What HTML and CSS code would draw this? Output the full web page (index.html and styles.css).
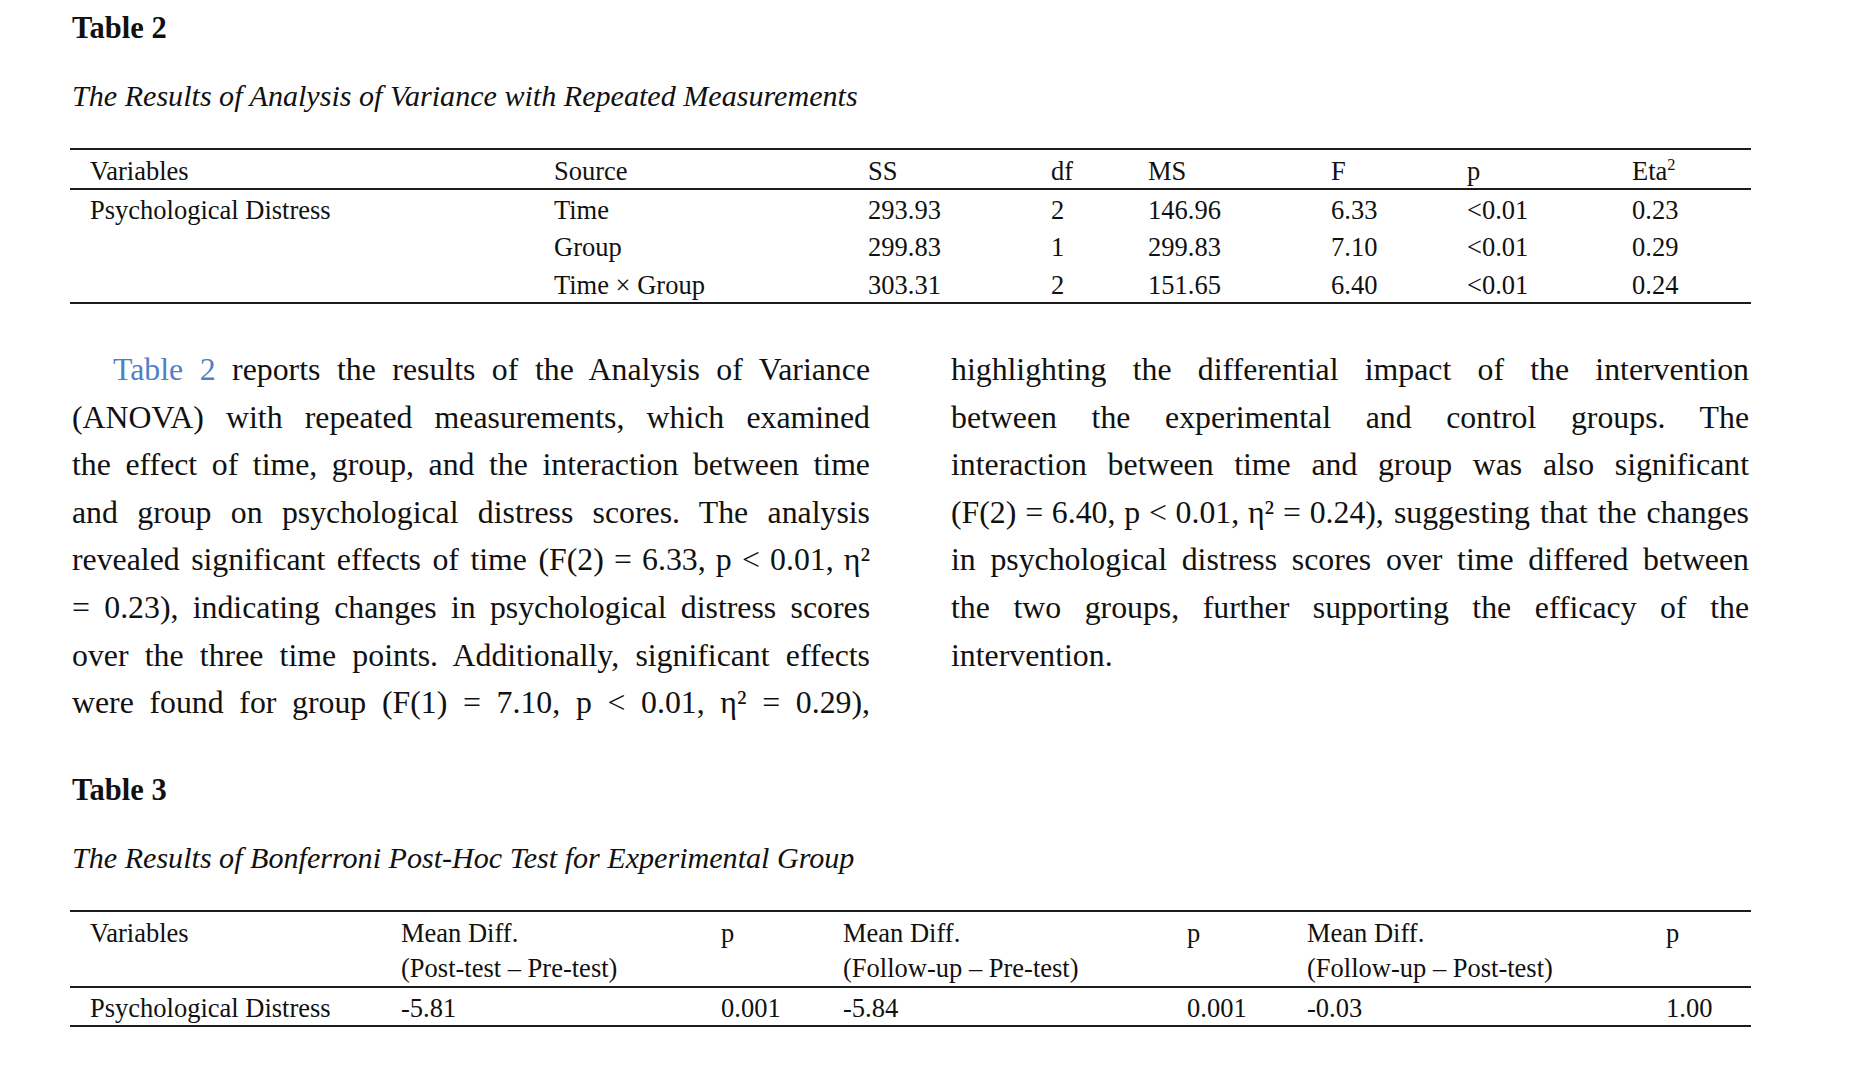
FILE: index.html
```html
<!DOCTYPE html>
<html lang="en">
<head>
<meta charset="utf-8">
<title>Results of Analysis of Variance</title>
<link rel="stylesheet" href="styles.css">
</head>
<body>
<main class="page">
  <h2 class="tbl-title">Table 2</h2>
  <p class="tbl-caption">The Results of Analysis of Variance with Repeated Measurements</p>
  <table class="data t2">
    <colgroup>
      <col class="w466"><col class="w314"><col class="w183"><col class="w97"><col class="w183"><col class="w136"><col class="w165"><col class="w137">
    </colgroup>
    <thead>
      <tr><th>Variables</th><th>Source</th><th>SS</th><th>df</th><th>MS</th><th>F</th><th>p</th><th>Eta<sup>2</sup></th></tr>
    </thead>
    <tbody>
      <tr class="first"><td>Psychological Distress</td><td>Time</td><td>293.93</td><td>2</td><td>146.96</td><td>6.33</td><td>&lt;0.01</td><td>0.23</td></tr>
      <tr><td></td><td>Group</td><td>299.83</td><td>1</td><td>299.83</td><td>7.10</td><td>&lt;0.01</td><td>0.29</td></tr>
      <tr class="last"><td></td><td>Time × Group</td><td>303.31</td><td>2</td><td>151.65</td><td>6.40</td><td>&lt;0.01</td><td>0.24</td></tr>
    </tbody>
  </table>

  <p class="body">
    <span class="ln indent"><a class="ref" href="#">Table 2</a> reports the results of the Analysis of Variance</span>
    <span class="ln">(ANOVA) with repeated measurements, which examined</span>
    <span class="ln">the effect of time, group, and the interaction between time</span>
    <span class="ln">and group on psychological distress scores. The analysis</span>
    <span class="ln">revealed significant effects of time <span class="eq">(F(2) = 6.33, p &lt; 0.01, η²</span></span>
    <span class="ln">= 0.23), indicating changes in psychological distress scores</span>
    <span class="ln">over the three time points. Additionally, significant effects</span>
    <span class="ln">were found for group (F(1) = 7.10, p &lt; 0.01, η² = 0.29),</span>
    <span class="ln">highlighting the differential impact of the intervention</span>
    <span class="ln">between the experimental and control groups. The</span>
    <span class="ln">interaction between time and group was also significant</span>
    <span class="ln"><span class="eq">(F(2) = 6.40, p &lt; 0.01, η² = 0.24),</span> suggesting that the changes</span>
    <span class="ln">in psychological distress scores over time differed between</span>
    <span class="ln">the two groups, further supporting the efficacy of the</span>
    <span class="ln end">intervention.</span>
  </p>

  <h2 class="tbl-title">Table 3</h2>
  <p class="tbl-caption">The Results of Bonferroni Post-Hoc Test for Experimental Group</p>
  <table class="data t3">
    <colgroup>
      <col class="w313"><col class="w320"><col class="w122"><col class="w344"><col class="w120"><col class="w359"><col class="w103">
    </colgroup>
    <thead>
      <tr>
        <th>Variables</th>
        <th>Mean Diff.<br>(Post-test – Pre-test)</th>
        <th>p</th>
        <th>Mean Diff.<br>(Follow-up – Pre-test)</th>
        <th>p</th>
        <th>Mean Diff.<br>(Follow-up – Post-test)</th>
        <th>p</th>
      </tr>
    </thead>
    <tbody>
      <tr class="first last"><td>Psychological Distress</td><td>-5.81</td><td>0.001</td><td>-5.84</td><td>0.001</td><td>-0.03</td><td>1.00</td></tr>
    </tbody>
  </table>
</main>
</body>
</html>
```

FILE: styles.css
```css
html, body {
  margin: 0;
  padding: 0;
  background: #ffffff;
}

body {
  font-family: "Liberation Serif", "Times New Roman", serif;
  color: #111111;
}

.page {
  width: 1677px;
  padding: 11px 0 0 72px;
}

.tbl-title {
  margin: 0 0 34px 0;
  font-size: 30.5px;
  line-height: 34px;
  font-weight: bold;
}

.tbl-caption {
  margin: 0 0 35px 0;
  font-size: 30.1px;
  line-height: 34px;
  font-style: italic;
}

/* tables */
.data {
  margin-left: -2px;
  width: 1681px;
  table-layout: fixed;
  border-collapse: separate;
  border-spacing: 0;
  font-size: 26.5px;
}

.data th,
.data td {
  padding: 0 0 0 18px;
  text-align: left;
  font-weight: normal;
  vertical-align: baseline;
  white-space: nowrap;
}

.data th:first-child,
.data td:first-child {
  padding-left: 20px;
}

.data th {
  border-top: 2px solid #1c1c1c;
  border-bottom: 2px solid #1c1c1c;
}

.data tr.last td {
  border-bottom: 2px solid #1c1c1c;
}

.t2 th {
  line-height: 33px;
  padding-top: 5px;
}

.t2 td {
  line-height: 37px;
}

.t2 tr.first td {
  padding-top: 2px;
}

.t2 tr.last td {
  line-height: 34px;
  padding-top: 1.5px;
}

.t3 th {
  line-height: 35px;
  padding-top: 4px;
  vertical-align: top;
}

.t3 td {
  line-height: 34px;
  padding-top: 3.5px;
}

.data sup {
  font-size: 0.62em;
  line-height: 0;
  vertical-align: 0.62em;
}

col.w466 { width: 466px; }
col.w314 { width: 314px; }
col.w183 { width: 183px; }
col.w97  { width: 97px; }
col.w136 { width: 136px; }
col.w165 { width: 165px; }
col.w137 { width: 137px; }
col.w313 { width: 313px; }
col.w320 { width: 320px; }
col.w122 { width: 122px; }
col.w344 { width: 344px; }
col.w120 { width: 120px; }
col.w359 { width: 359px; }
col.w103 { width: 103px; }

/* body text */
.body {
  margin: 42.5px 0 46px 0;
  width: 1677px;
  font-size: 31.8px;
  line-height: 47.6px;
  column-count: 2;
  column-gap: 81px;
  column-fill: balance;
}

.ln {
  display: block;
  text-align: justify;
  text-align-last: justify;
  white-space: normal;
}

.ln.indent {
  text-indent: 41px;
}

.ln.end {
  text-align-last: left;
}

.eq {
  word-spacing: -0.04em;
}

.ref {
  color: #4f80c6;
  text-decoration: none;
}
```
